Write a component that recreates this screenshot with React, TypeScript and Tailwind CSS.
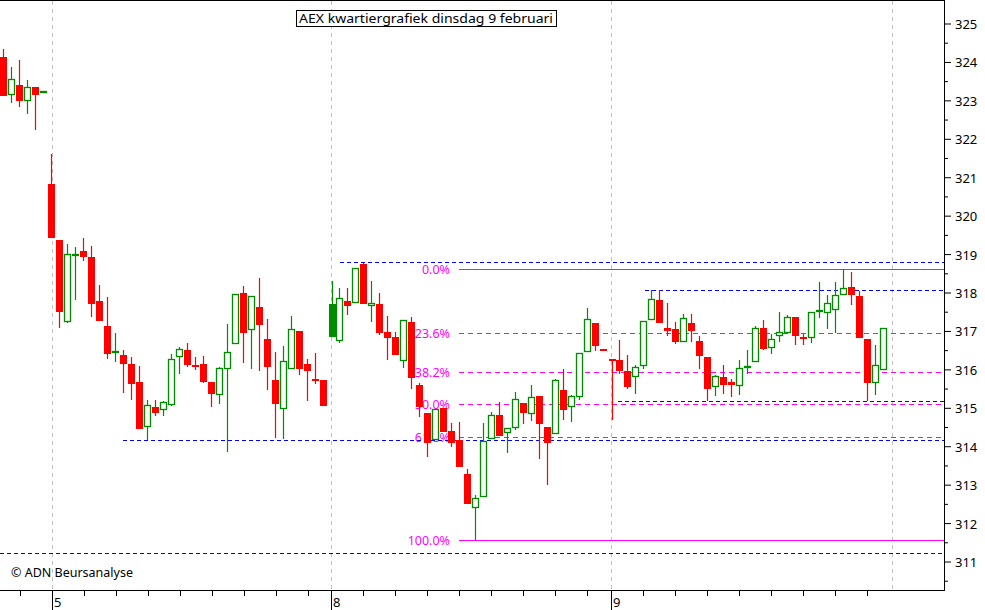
import React from "react";

type C = [number, number, number, number, number, string];
const candles: C[] = [
  [3, 57, 96, 49, 96, "r"],
  [11, 79, 95, 67, 103, "g"],
  [19, 85, 101, 60, 107, "r"],
  [27, 87, 101, 80, 114, "g"],
  [35, 87, 95, 87, 130, "r"],
  [43, 91, 92, 91, 92, "g"],
  [51, 184, 238, 154, 238, "r"],
  [59, 240, 312, 240, 328, "r"],
  [67, 254, 322, 244, 323, "g"],
  [75, 254, 254, 247, 300, "g"],
  [83, 251, 257, 238, 261, "r"],
  [91, 257, 304, 246, 317, "r"],
  [99, 301, 321, 285, 321, "r"],
  [107, 326, 354, 297, 359, "r"],
  [115, 351, 351, 333, 362, "g"],
  [123, 355, 364, 350, 393, "r"],
  [131, 364, 384, 357, 400, "r"],
  [139, 382, 429, 366, 429, "r"],
  [147, 405, 427, 400, 440, "g"],
  [155, 407, 413, 400, 416, "r"],
  [163, 402, 410, 401, 416, "g"],
  [171, 359, 405, 354, 406, "g"],
  [179, 349, 357, 347, 374, "g"],
  [187, 350, 365, 343, 367, "r"],
  [195, 365, 365, 357, 370, "r"],
  [203, 364, 382, 356, 383, "r"],
  [211, 382, 394, 382, 407, "r"],
  [219, 368, 395, 367, 404, "g"],
  [227, 352, 369, 324, 452, "g"],
  [235, 294, 344, 294, 344, "g"],
  [243, 293, 333, 286, 363, "r"],
  [251, 296, 330, 296, 369, "g"],
  [259, 307, 325, 278, 371, "r"],
  [267, 339, 367, 319, 390, "r"],
  [275, 380, 404, 352, 438, "r"],
  [283, 361, 409, 346, 439, "g"],
  [291, 329, 369, 316, 369, "g"],
  [299, 331, 369, 331, 375, "r"],
  [307, 364, 371, 359, 401, "r"],
  [315, 379, 379, 353, 384, "r"],
  [323, 380, 406, 380, 406, "r"],
  [332, 304, 337, 281, 337, "G"],
  [339, 298, 341, 288, 343, "g"],
  [347, 301, 306, 288, 315, "r"],
  [355, 268, 303, 268, 303, "g"],
  [363, 264, 304, 263, 304, "r"],
  [371, 303, 306, 281, 322, "g"],
  [379, 304, 333, 293, 335, "r"],
  [387, 332, 338, 316, 360, "r"],
  [395, 337, 355, 332, 355, "r"],
  [403, 320, 361, 320, 368, "g"],
  [411, 322, 378, 317, 389, "r"],
  [419, 385, 407, 383, 417, "r"],
  [427, 413, 443, 413, 457, "r"],
  [435, 409, 440, 409, 440, "g"],
  [443, 408, 432, 408, 432, "r"],
  [451, 431, 443, 423, 447, "r"],
  [459, 440, 467, 422, 467, "r"],
  [467, 474, 504, 469, 504, "r"],
  [475, 498, 508, 495, 540, "g"],
  [483, 441, 497, 423, 497, "g"],
  [491, 415, 439, 412, 439, "g"],
  [499, 415, 436, 402, 436, "r"],
  [507, 428, 433, 428, 453, "g"],
  [515, 399, 428, 392, 430, "g"],
  [523, 403, 413, 403, 424, "r"],
  [531, 397, 414, 385, 421, "g"],
  [539, 396, 424, 396, 459, "r"],
  [547, 427, 443, 427, 485, "r"],
  [555, 380, 434, 379, 434, "g"],
  [563, 390, 410, 369, 420, "r"],
  [571, 396, 407, 395, 422, "g"],
  [579, 353, 397, 353, 400, "g"],
  [587, 319, 352, 308, 352, "g"],
  [595, 323, 346, 323, 351, "r"],
  [603, 349, 349, 349, 349, "r"],
  [612, 359, 359, 359, 420, "r"],
  [619, 360, 371, 340, 374, "r"],
  [627, 371, 387, 355, 389, "r"],
  [635, 367, 377, 365, 394, "g"],
  [643, 321, 366, 321, 369, "g"],
  [651, 299, 320, 290, 320, "g"],
  [659, 300, 323, 290, 323, "r"],
  [667, 328, 331, 303, 336, "r"],
  [675, 329, 342, 322, 344, "r"],
  [683, 318, 342, 314, 342, "g"],
  [691, 323, 331, 314, 342, "r"],
  [699, 341, 356, 336, 369, "r"],
  [707, 357, 389, 357, 401, "r"],
  [715, 376, 387, 375, 396, "g"],
  [723, 377, 385, 365, 394, "r"],
  [731, 382, 385, 379, 397, "r"],
  [739, 368, 386, 360, 395, "g"],
  [747, 366, 368, 350, 374, "g"],
  [755, 328, 362, 326, 362, "g"],
  [763, 328, 349, 320, 350, "r"],
  [771, 339, 348, 334, 354, "g"],
  [779, 332, 336, 312, 342, "g"],
  [787, 317, 333, 315, 333, "g"],
  [795, 317, 336, 317, 345, "r"],
  [803, 337, 337, 334, 345, "r"],
  [811, 312, 338, 312, 343, "g"],
  [819, 310, 310, 282, 318, "g"],
  [827, 303, 313, 295, 329, "g"],
  [835, 295, 310, 282, 333, "g"],
  [843, 288, 295, 269, 295, "g"],
  [851, 287, 295, 272, 305, "r"],
  [859, 296, 338, 291, 338, "r"],
  [867, 339, 383, 339, 401, "r"],
  [875, 365, 383, 345, 395, "g"],
  [883, 328, 370, 328, 370, "g"],
];

const RED = "#ff0000";
const GREEN = "#008c00";
const MAG = "#ff00ff";
const BLUE = "#0000ff";
const AX = 944;

const prices = [325, 324, 323, 322, 321, 320, 319, 318, 317, 316, 315, 314, 313, 312, 311];
const py = (p: number) => 24 + (325 - p) * 38.43;

const fibs: [string, number, boolean][] = [
  ["0.0%", 269, true],
  ["23.6%", 333, false],
  ["38.2%", 372, false],
  ["50.0%", 404, false],
  ["61.8%", 437, false],
  ["100.0%", 540, true],
];

const blues: [number, number][] = [
  [340, 262],
  [645, 290],
  [618, 401],
  [123, 440],
  [0, 553],
];

export default function App() {
  const xticks: number[] = [20, 84, 116, 148, 180, 212, 244, 276, 308];
  [331, 611].forEach((d) => {
    for (let k = 1; k < 9; k++) xticks.push(d + 32 * k);
  });
  return (
    <div className="w-[985px] h-[610px] bg-white overflow-hidden">
      <svg width={985} height={610} viewBox="0 0 985 610" className="block font-['DejaVu_Sans',sans-serif]">
        {[52, 331, 611, 892].map((x) => (
          <line key={x} x1={x + 0.5} y1={1} x2={x + 0.5} y2={590} stroke="#c0c0c0" strokeDasharray="4 4" />
        ))}
        {fibs.map(([t, y]) => (
          <text key={t} x={450} y={y + 5} fill={MAG} fontSize={12.5} textAnchor="end">
            {t}
          </text>
        ))}
        {fibs.map(([t, y, solid]) => (
          <line key={"l" + t} x1={459} y1={y + 0.5} x2={AX} y2={y + 0.5} stroke={MAG} strokeDasharray={solid ? undefined : "5 4"} />
        ))}
        {blues.map(([x, y]) => (
          <line key={"b" + y} x1={x} y1={y + 0.5} x2={AX} y2={y + 0.5} stroke={BLUE} strokeDasharray="4 3" />
        ))}
        {candles.map(([cx, t, b, wt, wb, c], i) => {
          const col = c === "r" ? RED : GREEN;
          const h = Math.max(b - t, 2);
          return (
            <g key={i}>
              <line x1={cx + 0.5} y1={wt} x2={cx + 0.5} y2={wb} stroke={col} strokeWidth={1.2} />
              {c === "g" ? (
                <rect x={cx - 2.5} y={t + 0.5} width={6} height={Math.max(h - 1, 1)} fill="white" stroke={col} strokeWidth={1.3} />
              ) : (
                <rect x={cx - 3} y={t} width={7} height={h} fill={col} />
              )}
            </g>
          );
        })}
        <line x1={0} y1={0.5} x2={AX} y2={0.5} stroke="#000" />
        <line x1={AX + 0.5} y1={0} x2={AX + 0.5} y2={590} stroke="#000" />
        <line x1={0} y1={590.5} x2={AX + 1} y2={590.5} stroke="#000" />
        {prices.map((p) => (
          <g key={p}>
            <line x1={AX} y1={py(p)} x2={AX + 7} y2={py(p)} stroke="#000" />
            <line x1={AX} y1={py(p) + 19.2} x2={AX + 4} y2={py(p) + 19.2} stroke="#000" />
            <text x={955} y={py(p) + 5} fontSize={13} fill="#000">
              {p}
            </text>
          </g>
        ))}
        {xticks.map((x) => (
          <line key={"t" + x} x1={x + 0.5} y1={590} x2={x + 0.5} y2={596} stroke="#000" />
        ))}
        {([
          [52, "5"],
          [331, "8"],
          [611, "9"],
        ] as [number, string][]).map(([x, l]) => (
          <g key={l}>
            <line x1={x + 0.5} y1={590} x2={x + 0.5} y2={610} stroke="#000" />
            <text x={x + 2} y={607} fontSize={13} fill="#000">
              {l}
            </text>
          </g>
        ))}
        <rect x={296.5} y={10.5} width={260} height={16} fill="white" stroke="#000" />
        <text x={299} y={23} fontSize={12.5} fill="#000" textLength={254} lengthAdjust="spacingAndGlyphs">
          AEX kwartiergrafiek dinsdag 9 februari
        </text>
        <text x={11} y={577} fontSize={12.5} fill="#000">
          © ADN Beursanalyse
        </text>
      </svg>
    </div>
  );
}
